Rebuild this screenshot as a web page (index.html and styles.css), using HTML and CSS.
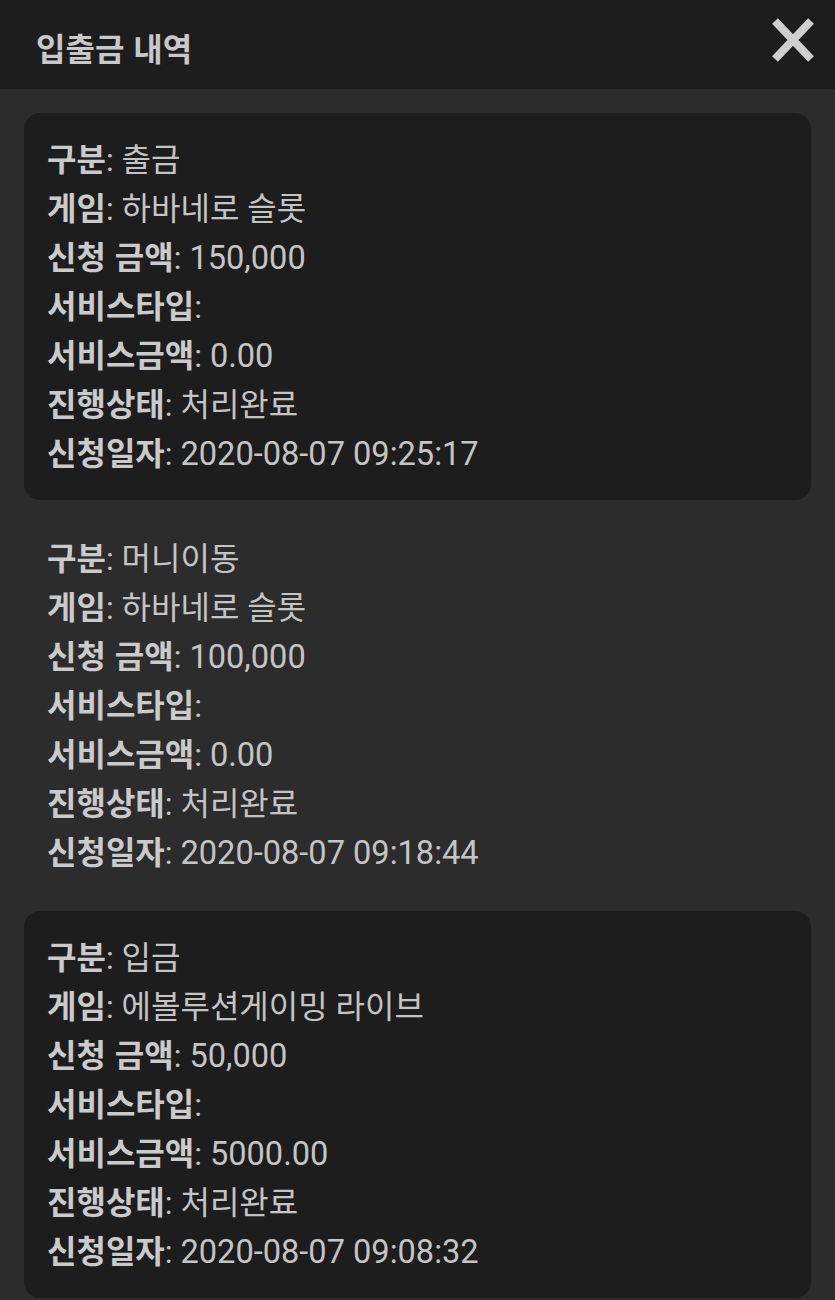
FILE: index.html
```html
<!DOCTYPE html>
<html lang="ko">
<head>
<meta charset="utf-8">
<title>입출금 내역</title>
<link rel="stylesheet" href="styles.css">
</head>
<body>
<header class="topbar">
  <h1 class="title">입출금 내역</h1>
  <button class="close" aria-label="닫기">
    <svg width="42" height="44" viewBox="0 0 42 44"><path d="M3 3 L39 41 M39 3 L3 41" stroke="#cfcfcf" stroke-width="8" fill="none"/></svg>
  </button>
</header>
<main class="list">
  <section class="item card">
    <p class="row"><b>구분</b>: 출금</p>
    <p class="row"><b>게임</b>: 하바네로 슬롯</p>
    <p class="row"><b>신청 금액</b>: <span class="num">150,000</span></p>
    <p class="row"><b>서비스타입</b>:</p>
    <p class="row"><b>서비스금액</b>: <span class="num">0.00</span></p>
    <p class="row"><b>진행상태</b>: 처리완료</p>
    <p class="row"><b>신청일자</b>: <span class="num">2020-08-07 09:25:17</span></p>
  </section>
  <section class="item">
    <p class="row"><b>구분</b>: 머니이동</p>
    <p class="row"><b>게임</b>: 하바네로 슬롯</p>
    <p class="row"><b>신청 금액</b>: <span class="num">100,000</span></p>
    <p class="row"><b>서비스타입</b>:</p>
    <p class="row"><b>서비스금액</b>: <span class="num">0.00</span></p>
    <p class="row"><b>진행상태</b>: 처리완료</p>
    <p class="row"><b>신청일자</b>: <span class="num">2020-08-07 09:18:44</span></p>
  </section>
  <section class="item card">
    <p class="row"><b>구분</b>: 입금</p>
    <p class="row"><b>게임</b>: 에볼루션게이밍 라이브</p>
    <p class="row"><b>신청 금액</b>: <span class="num">50,000</span></p>
    <p class="row"><b>서비스타입</b>:</p>
    <p class="row"><b>서비스금액</b>: <span class="num">5000.00</span></p>
    <p class="row"><b>진행상태</b>: 처리완료</p>
    <p class="row"><b>신청일자</b>: <span class="num">2020-08-07 09:08:32</span></p>
  </section>
</main>
</body>
</html>
```

FILE: styles.css
```css
html, body {
  margin: 0;
  padding: 0;
  background: #2c2c2c;
}
body {
  font-family: Roboto, "Noto Sans CJK KR", sans-serif;
  color: #c4c4c4;
}
.topbar {
  height: 89px;
  background: #1d1d1d;
  display: flex;
  align-items: center;
  justify-content: space-between;
  padding: 0 21px 0 36px;
  box-sizing: border-box;
}
.title {
  margin: 0;
  font-family: "Noto Sans CJK KR", sans-serif;
  font-size: 32px;
  font-weight: 700;
  color: #c8c8c8;
  padding-top: 4px;
}
.close {
  background: none;
  border: 0;
  padding: 0;
  width: 42px;
  height: 44px;
  display: flex;
  margin-top: -9px;
}
.list {
  padding: 24px 24px 0;
  display: flex;
  flex-direction: column;
  gap: 12px;
}
.item {
  padding: 20px 23px 24px;
  border-radius: 16px;
}
.card {
  background: #1d1d1d;
}
.row {
  margin: 0;
  font-size: 32px;
  line-height: 49px;
  height: 49px;
  white-space: nowrap;
}
.row b {
  font-family: "Noto Sans CJK KR", sans-serif;
  font-weight: 700;
  color: #cacaca;
}
.num {
  font-family: Roboto, sans-serif;
  font-size: 32.6px;
}
```
